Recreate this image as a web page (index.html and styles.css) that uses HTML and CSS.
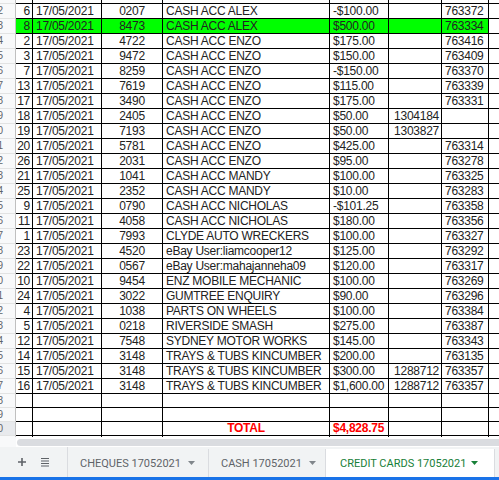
FILE: index.html
```html
<!DOCTYPE html>
<html>
<head>
<meta charset="utf-8">
<link rel="stylesheet" href="styles.css">
</head>
<body>
<div class="sheet">
  <div class="row top"><div class="cell rh"><span>1</span></div><div class="cell"></div><div class="cell"></div><div class="cell"></div><div class="cell"></div><div class="cell"></div><div class="cell"></div><div class="cell"></div><div class="cell"></div></div>
  <div class="row"><div class="cell rh"><span>2</span></div><div class="cell r">6</div><div class="cell">17/05/2021</div><div class="cell c">0207</div><div class="cell">CASH ACC ALEX</div><div class="cell">-$100.00</div><div class="cell r"></div><div class="cell">763372</div><div class="cell"></div></div>
  <div class="row green"><div class="cell rh"><span>3</span></div><div class="cell r">8</div><div class="cell">17/05/2021</div><div class="cell c">8473</div><div class="cell">CASH ACC ALEX</div><div class="cell">$500.00</div><div class="cell r"></div><div class="cell">763334</div><div class="cell plain"></div></div>
  <div class="row"><div class="cell rh"><span>4</span></div><div class="cell r">2</div><div class="cell">17/05/2021</div><div class="cell c">4722</div><div class="cell">CASH ACC ENZO</div><div class="cell">$175.00</div><div class="cell r"></div><div class="cell">763416</div><div class="cell"></div></div>
  <div class="row"><div class="cell rh"><span>5</span></div><div class="cell r">3</div><div class="cell">17/05/2021</div><div class="cell c">9472</div><div class="cell">CASH ACC ENZO</div><div class="cell">$150.00</div><div class="cell r"></div><div class="cell">763409</div><div class="cell"></div></div>
  <div class="row"><div class="cell rh"><span>6</span></div><div class="cell r">7</div><div class="cell">17/05/2021</div><div class="cell c">8259</div><div class="cell">CASH ACC ENZO</div><div class="cell">-$150.00</div><div class="cell r"></div><div class="cell">763370</div><div class="cell"></div></div>
  <div class="row"><div class="cell rh"><span>7</span></div><div class="cell r">13</div><div class="cell">17/05/2021</div><div class="cell c">7619</div><div class="cell">CASH ACC ENZO</div><div class="cell">$115.00</div><div class="cell r"></div><div class="cell">763339</div><div class="cell"></div></div>
  <div class="row"><div class="cell rh"><span>8</span></div><div class="cell r">17</div><div class="cell">17/05/2021</div><div class="cell c">3490</div><div class="cell">CASH ACC ENZO</div><div class="cell">$175.00</div><div class="cell r"></div><div class="cell">763331</div><div class="cell"></div></div>
  <div class="row"><div class="cell rh"><span>9</span></div><div class="cell r">18</div><div class="cell">17/05/2021</div><div class="cell c">2405</div><div class="cell">CASH ACC ENZO</div><div class="cell">$50.00</div><div class="cell r">1304184</div><div class="cell"></div><div class="cell"></div></div>
  <div class="row"><div class="cell rh"><span>10</span></div><div class="cell r">19</div><div class="cell">17/05/2021</div><div class="cell c">7193</div><div class="cell">CASH ACC ENZO</div><div class="cell">$50.00</div><div class="cell r">1303827</div><div class="cell"></div><div class="cell"></div></div>
  <div class="row"><div class="cell rh"><span>11</span></div><div class="cell r">20</div><div class="cell">17/05/2021</div><div class="cell c">5781</div><div class="cell">CASH ACC ENZO</div><div class="cell">$425.00</div><div class="cell r"></div><div class="cell">763314</div><div class="cell"></div></div>
  <div class="row"><div class="cell rh"><span>12</span></div><div class="cell r">26</div><div class="cell">17/05/2021</div><div class="cell c">2031</div><div class="cell">CASH ACC ENZO</div><div class="cell">$95.00</div><div class="cell r"></div><div class="cell">763278</div><div class="cell"></div></div>
  <div class="row"><div class="cell rh"><span>13</span></div><div class="cell r">21</div><div class="cell">17/05/2021</div><div class="cell c">1041</div><div class="cell">CASH ACC MANDY</div><div class="cell">$100.00</div><div class="cell r"></div><div class="cell">763325</div><div class="cell"></div></div>
  <div class="row"><div class="cell rh"><span>14</span></div><div class="cell r">25</div><div class="cell">17/05/2021</div><div class="cell c">2352</div><div class="cell">CASH ACC MANDY</div><div class="cell">$10.00</div><div class="cell r"></div><div class="cell">763283</div><div class="cell"></div></div>
  <div class="row"><div class="cell rh"><span>15</span></div><div class="cell r">9</div><div class="cell">17/05/2021</div><div class="cell c">0790</div><div class="cell">CASH ACC NICHOLAS</div><div class="cell">-$101.25</div><div class="cell r"></div><div class="cell">763358</div><div class="cell"></div></div>
  <div class="row"><div class="cell rh"><span>16</span></div><div class="cell r">11</div><div class="cell">17/05/2021</div><div class="cell c">4058</div><div class="cell">CASH ACC NICHOLAS</div><div class="cell">$180.00</div><div class="cell r"></div><div class="cell">763356</div><div class="cell"></div></div>
  <div class="row"><div class="cell rh"><span>17</span></div><div class="cell r">1</div><div class="cell">17/05/2021</div><div class="cell c">7993</div><div class="cell">CLYDE AUTO WRECKERS</div><div class="cell">$100.00</div><div class="cell r"></div><div class="cell">763327</div><div class="cell"></div></div>
  <div class="row"><div class="cell rh"><span>18</span></div><div class="cell r">23</div><div class="cell">17/05/2021</div><div class="cell c">4520</div><div class="cell">eBay User:liamcooper12</div><div class="cell">$125.00</div><div class="cell r"></div><div class="cell">763292</div><div class="cell"></div></div>
  <div class="row"><div class="cell rh"><span>19</span></div><div class="cell r">22</div><div class="cell">17/05/2021</div><div class="cell c">0567</div><div class="cell">eBay User:mahajanneha09</div><div class="cell">$120.00</div><div class="cell r"></div><div class="cell">763317</div><div class="cell"></div></div>
  <div class="row"><div class="cell rh"><span>20</span></div><div class="cell r">10</div><div class="cell">17/05/2021</div><div class="cell c">9454</div><div class="cell">ENZ MOBILE MECHANIC</div><div class="cell">$100.00</div><div class="cell r"></div><div class="cell">763269</div><div class="cell"></div></div>
  <div class="row"><div class="cell rh"><span>21</span></div><div class="cell r">24</div><div class="cell">17/05/2021</div><div class="cell c">3022</div><div class="cell">GUMTREE ENQUIRY</div><div class="cell">$90.00</div><div class="cell r"></div><div class="cell">763296</div><div class="cell"></div></div>
  <div class="row"><div class="cell rh"><span>22</span></div><div class="cell r">4</div><div class="cell">17/05/2021</div><div class="cell c">1038</div><div class="cell">PARTS ON WHEELS</div><div class="cell">$100.00</div><div class="cell r"></div><div class="cell">763384</div><div class="cell"></div></div>
  <div class="row"><div class="cell rh"><span>23</span></div><div class="cell r">5</div><div class="cell">17/05/2021</div><div class="cell c">0218</div><div class="cell">RIVERSIDE SMASH</div><div class="cell">$275.00</div><div class="cell r"></div><div class="cell">763387</div><div class="cell"></div></div>
  <div class="row"><div class="cell rh"><span>24</span></div><div class="cell r">12</div><div class="cell">17/05/2021</div><div class="cell c">7548</div><div class="cell">SYDNEY MOTOR WORKS</div><div class="cell">$145.00</div><div class="cell r"></div><div class="cell">763343</div><div class="cell"></div></div>
  <div class="row"><div class="cell rh"><span>25</span></div><div class="cell r">14</div><div class="cell">17/05/2021</div><div class="cell c">3148</div><div class="cell">TRAYS &amp; TUBS KINCUMBER</div><div class="cell">$200.00</div><div class="cell r"></div><div class="cell">763135</div><div class="cell"></div></div>
  <div class="row"><div class="cell rh"><span>26</span></div><div class="cell r">15</div><div class="cell">17/05/2021</div><div class="cell c">3148</div><div class="cell">TRAYS &amp; TUBS KINCUMBER</div><div class="cell">$300.00</div><div class="cell r">1288712</div><div class="cell">763357</div><div class="cell"></div></div>
  <div class="row"><div class="cell rh"><span>27</span></div><div class="cell r">16</div><div class="cell">17/05/2021</div><div class="cell c">3148</div><div class="cell">TRAYS &amp; TUBS KINCUMBER</div><div class="cell">$1,600.00</div><div class="cell r">1288712</div><div class="cell">763357</div><div class="cell"></div></div>
  <div class="row short"><div class="cell rh"><span>28</span></div><div class="cell"></div><div class="cell"></div><div class="cell"></div><div class="cell"></div><div class="cell"></div><div class="cell"></div><div class="cell"></div><div class="cell"></div></div>
  <div class="row short"><div class="cell rh"><span>29</span></div><div class="cell"></div><div class="cell"></div><div class="cell"></div><div class="cell"></div><div class="cell"></div><div class="cell"></div><div class="cell"></div><div class="cell"></div></div>
  <div class="row short total"><div class="cell rh sel"><span>30</span></div><div class="cell"></div><div class="cell"></div><div class="cell"></div><div class="cell c red">TOTAL</div><div class="cell red">$4,828.75</div><div class="cell"></div><div class="cell"></div><div class="cell"></div></div>
  <div class="row short"><div class="cell rh"><span>31</span></div><div class="cell"></div><div class="cell"></div><div class="cell"></div><div class="cell"></div><div class="cell"></div><div class="cell"></div><div class="cell"></div><div class="cell"></div></div>
</div>
<div class="hscroll">
  <div class="hs-corner"></div>
  <div class="hs-track"><div class="hs-thumb"></div></div>
</div>
<div class="tabbar">
  <div class="tb-tools">
    <svg class="ico" width="10" height="10" viewBox="0 0 10 10"><path d="M5 1v8M1 5h8" stroke="#5f6368" stroke-width="1.6" fill="none"/></svg>
    <svg class="ico" width="10" height="10" viewBox="0 0 10 10"><path d="M1 1.5h8M1 4h8M1 6.5h8M1 9h8" stroke="#5f6368" stroke-width="1.2" fill="none"/></svg>
  </div>
  <div class="tab t1"><span>CHEQUES 17052021</span><svg class="caret" width="7" height="4" viewBox="0 0 7 4"><path d="M0 0h7L3.5 4z" fill="#80868b"/></svg></div>
  <div class="tab t2"><span>CASH 17052021</span><svg class="caret" width="7" height="4" viewBox="0 0 7 4"><path d="M0 0h7L3.5 4z" fill="#80868b"/></svg></div>
  <div class="tab t3 active"><span>CREDIT CARDS 17052021</span><svg class="caret" width="7" height="4" viewBox="0 0 7 4"><path d="M0 0h7L3.5 4z" fill="#188038"/></svg></div>
  <div class="tab-rest"></div>
</div>
<div class="blueline"></div>
</body>
</html>
```

FILE: styles.css
```css
html, body {
  margin: 0;
  padding: 0;
}
body {
  width: 499px;
  height: 480px;
  overflow: hidden;
  background: #fff;
  font-family: "Liberation Sans", Arial, sans-serif;
}
.sheet {
  height: 437px;
  overflow: hidden;
}
.row {
  display: grid;
  grid-template-columns: 16px 17px 69px 61px 167px 59px 53px 47px 40px;
  height: 15px;
}
.row.top {
  height: 4px;
}
.row.short {
  height: 14px;
}
.cell {
  box-sizing: border-box;
  border-right: 1px solid #000;
  border-bottom: 1px solid #000;
  padding: 0 2px 0 3px;
  font-size: 12px;
  letter-spacing: -0.25px;
  line-height: 14px;
  color: #222;
  white-space: nowrap;
  overflow: hidden;
  display: flex;
  align-items: flex-end;
}
.row.short .cell {
  line-height: 13px;
}
.cell.r {
  justify-content: flex-end;
  padding: 0 2px 0 1px;
}
.cell.c {
  justify-content: center;
  padding: 0;
}
.cell.rh {
  background: #f8f9fa;
  border-right: 1px solid #c0c0c0;
  border-bottom: 1px solid #e2e3e3;
  color: #5f6368;
  font-size: 10px;
  letter-spacing: 0;
  justify-content: flex-end;
  padding: 0 12px 0 0;
}
.cell.rh.sel {
  background: #e8eaed;
}
.green .cell:not(.rh):not(.plain) {
  background: #00ff00;
}
.cell.red {
  color: #ff0000;
  font-weight: bold;
}
.hscroll {
  display: flex;
  height: 10px;
}
.hs-corner {
  width: 16px;
  background: #f8f9fa;
}
.hs-track {
  flex: 1;
  background: #fff;
  padding: 2px 0 1px 1px;
}
.hs-thumb {
  height: 7px;
  background: #dadce0;
  border-radius: 4px 0 0 4px;
}
.tabbar {
  display: flex;
  height: 30px;
  background: #f1f3f4;
  font-family: Roboto, "Liberation Sans", sans-serif;
  font-size: 11px;
  color: #5f6368;
}
.tb-tools {
  width: 68px;
  display: flex;
  align-items: center;
  gap: 13px;
  padding-left: 17px;
  box-sizing: border-box;
  border-right: 1px solid #dadce0;
}
.ico {
  display: block;
}
.tab {
  box-sizing: border-box;
  display: flex;
  align-items: center;
  gap: 7px;
  padding-left: 12px;
  border-right: 1px solid #dadce0;
  margin-top: 2px;
}
.t1 {
  width: 141px;
}
.t2 {
  width: 117px;
}
.t3 {
  width: 169px;
}
.tab.active {
  background: #fff;
  color: #188038;
  padding-left: 14px;
  gap: 5px;
}
.caret {
  display: block;
}
.tab-rest {
  flex: 1;
}
.blueline {
  height: 3px;
  background: #1a73e8;
}
```
